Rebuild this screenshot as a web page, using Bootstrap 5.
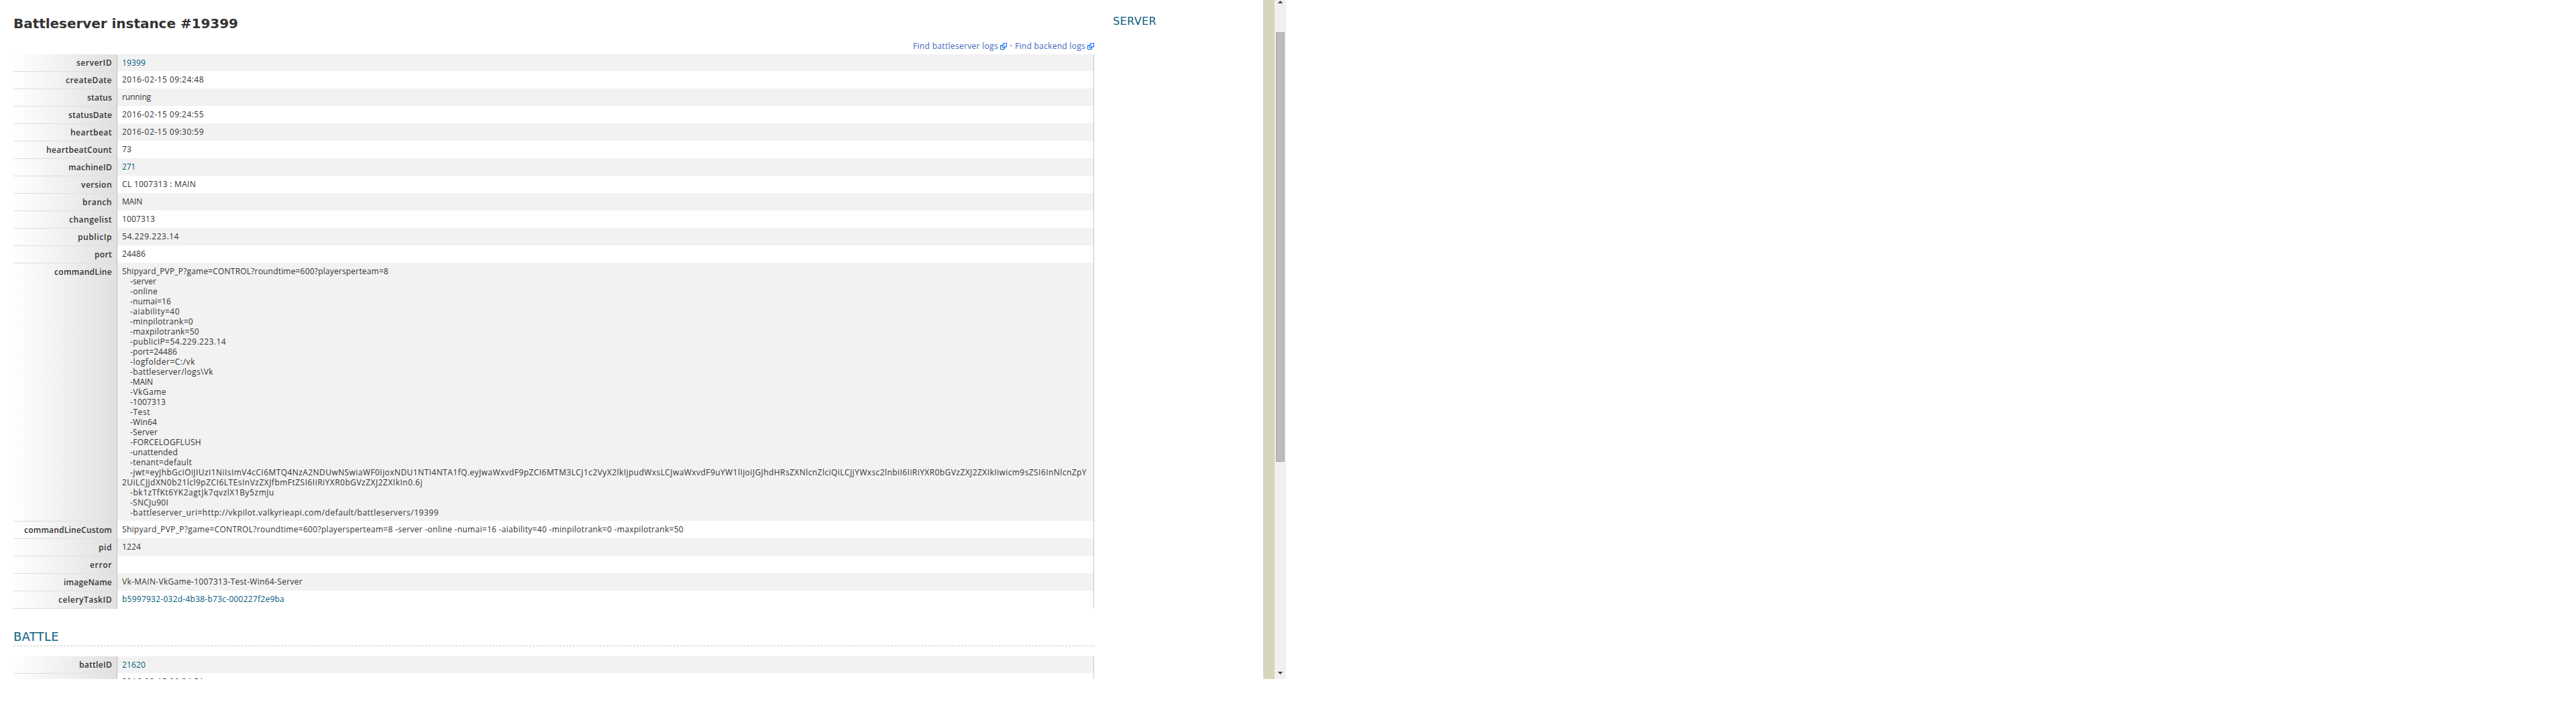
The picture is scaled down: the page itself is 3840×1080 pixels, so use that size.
<!DOCTYPE html>
<html lang="en"><head><meta charset="utf-8"><title>Battleserver instance #19399</title>
<link href="https://cdn.jsdelivr.net/npm/bootstrap@5.3.0/dist/css/bootstrap.min.css" rel="stylesheet">
<script src="https://cdn.jsdelivr.net/npm/bootstrap@5.3.0/dist/js/bootstrap.bundle.min.js"></script>
<style>
body{background:#fff;color:#333;font:12px/15px "Open Sans",sans-serif;overflow:hidden}
.viewport{width:1917px;height:1013px}
.main-col{width:1611px;margin-left:20px}
h1,h2{font-family:"DejaVu Sans",sans-serif;white-space:nowrap}
h1{font-size:20px;line-height:24px;font-weight:700;margin:23px 0 0}
h2{color:#0d6080;font-weight:400}
.log-links{height:34px;padding-top:14px;line-height:16px}
.log-links a{color:#3f66bd;text-decoration:none}
.ext{width:10px;height:10px;display:block;margin:3px 0 0 3px}
.dot-sep{width:12px;text-align:center}
.kv{border-right:1px solid #c8c8c8}
.kv-row{min-height:26px}
.kv-row:first-child{min-height:25px}
.kv-key{width:155px;border-right:1px solid #c0c0c0;padding:5px 7px 0 0;text-align:right;font-weight:600;line-height:16px;background:linear-gradient(to right,#fff,#e0e0e0)}
.kv-row:not(:first-child) .kv-key{padding-top:6px;background:linear-gradient(to right,#ddd,#e0e0e0) 0 0/100% 1px no-repeat,linear-gradient(to right,#fff,#e0e0e0)}
.kv-val{padding:5px 7px 5px;white-space:nowrap}
.kv-row:nth-child(odd) .kv-val{background:#f2f2f2}
.kv-val a{color:#045a7b;text-decoration:none}
.ln{height:15px;white-space:pre}
.ln.arg{padding-left:12px}
.kv-end{width:155px;height:1px;background:#ddd;border-right:1px solid #c0c0c0}
.side{margin-left:28px;font-size:16px;line-height:20px;margin-top:22px;height:20px}
.section{font-size:18px;line-height:22px;margin:31px 0 15px;height:25px;border-bottom:1px dashed #c8c8c8}
.olive{width:17px;background:#d6d6bc}
.sbar{width:17px;background:#f0f0f0;padding:0 2px}
.thumb{height:641px;background:#bbb;border:1px solid #a8a8a8}
</style></head><body>
<div class="viewport d-flex overflow-hidden">
<main class="main-col flex-shrink-0">
<h1><span data-w="335">Battleserver instance #19399</span></h1>
<div class="log-links d-flex justify-content-end">
<a href="#"><span data-w="127">Find battleserver logs</span></a><svg class="ext" viewBox="1 1 10 10"><g id="ext"><path fill="#fff" stroke="#06c" d="M1.500 4.518h5.982V10.500H1.500z"/><path fill="#06f" d="M5.765 1H11v5.390L9.427 7.937l-1.310-1.310L5.393 9.350l-2.690-2.688 2.810-2.808L4.200 2.544z"/><path fill="#fff" d="M9.995 2.004l.022 4.885L8.200 5.070 5.320 7.950 4.090 6.723l2.882-2.880-1.850-1.852z"/></g></svg><span class="dot-sep">·</span><a href="#"><span data-w="105">Find backend logs</span></a><svg class="ext" viewBox="1 1 10 10"><use href="#ext"/></svg>
</div>
<div class="kv" id="server"></div><div class="kv-end"></div>
<h2 class="section"><span data-w="68">BATTLE</span></h2>
<div class="kv" id="battle"></div>
</main>
<aside class="flex-grow-1"><h2 class="side"><span data-w="65">SERVER</span></h2></aside>
<div class="olive flex-shrink-0"></div>
<div class="sbar flex-shrink-0 d-flex flex-column">
<svg width="13" height="48" viewBox="0 0 13 48" shape-rendering="crispEdges"><path d="M3 5h7v-1h-1v-1h-1v-1h-1v-1h-1v1h-1v1h-1v1h-1z" fill="#505050"/></svg>
<div class="thumb"></div>
<svg class="mt-auto" width="13" height="12" viewBox="0 0 13 12" shape-rendering="crispEdges"><path d="M3 1h7v1h-1v1h-1v1h-1v1h-1v-1h-1v-1h-1v-1h-1z" fill="#505050"/></svg>
</div></div>
<script>
// [key, key width, lines, isLink]; a line is [text, width, indented]
const cmd="Shipyard_PVP_P?game=CONTROL?roundtime=600?playersperteam=8";
const server=[
["serverID",53,[["19399",35]],1],["createDate",69,[["2016-02-15 09:24:48",122]]],["status",37,[["running",43]]],
["statusDate",65,[["2016-02-15 09:24:55",122]]],["heartbeat",62,[["2016-02-15 09:30:59",122]]],["heartbeatCount",98,[["73",14]]],
["machineID",65,[["271",20]],1],["version",46,[["CL 1007313 : MAIN",110]]],["branch",44,[["MAIN",30]]],
["changelist",64,[["1007313",49]]],["publicIp",51,[["54.229.223.14",85]]],["port",26,[["24486",35]]],
["commandLine",86,[[cmd,397],["-server",39,1],["-online",41,1],["-numai=16",61,1],["-aiability=40",74,1],["-minpilotrank=0",94,1],
["-maxpilotrank=50",103,1],["-publicIP=54.229.223.14",143,1],["-port=24486",70,1],["-logfolder=C:/vk",97,1],["-battleserver/logs\\Vk",124,1],
["-MAIN",34,1],["-VkGame",54,1],["-1007313",53,1],["-Test",30,1],["-Win64",40,1],["-Server",41,1],["-FORCELOGFLUSH",106,1],
["-unattended",71,1],["-tenant=default",92,1],
["-jwt=eyJhbGciOiJIUzI1NiIsImV4cCI6MTQ4NzA2NDUwNSwiaWF0IjoxNDU1NTI4NTA1fQ.eyJwaWxvdF9pZCI6MTM3LCJ1c2VyX2lkIjpudWxsLCJwaWxvdF9uYW1lIjoiJGJhdHRsZXNlcnZlciQiLCJjYWxsc2lnbiI6IiRiYXR0bGVzZXJ2ZXIkIiwicm9sZSI6InNlcnZpY",1426,1],
["2UiLCJjdXN0b21lcl9pZCI6LTEsInVzZXJfbmFtZSI6IiRiYXR0bGVzZXJ2ZXIkIn0.6j",448],
["-bk1zTfKt6YK2agtJk7qvzlX1By5zmJu",215,1],["-SNCJu90I",57,1],["-battleserver_uri=http://vkpilot.valkyrieapi.com/default/battleservers/19399",460,1]]],
["commandLineCustom",131,[[cmd+" -server -online -numai=16 -aiability=40 -minpilotrank=0 -maxpilotrank=50",837]]],
["pid",20,[["1224",28]]],["error",33,[["",0]]],["imageName",72,[["Vk-MAIN-VkGame-1007313-Test-Win64-Server",269]]],
["celeryTaskID",80,[["b5997932-032d-4b38-b73c-000227f2e9ba",242]],1]];
const battle=[["battleID",49,[["21620",35]],1],["createDate",69,[["2016-02-15 09:24:51",122]]]];
function draw(id,rows){document.getElementById(id).innerHTML=rows.map(([k,kw,lines,link])=>
`<div class="kv-row d-flex"><div class="kv-key flex-shrink-0"><span data-w="${kw}">${k}</span></div><div class="kv-val flex-grow-1">${
lines.map(([t,w,a])=>`<div class="ln${a?' arg':''}">${link?'<a href="#">':''}<span data-w="${w}">${t}</span>${link?'</a>':''}</div>`).join('')}</div></div>`).join('')}
draw('server',server);draw('battle',battle);
document.querySelectorAll('[data-w]').forEach(e=>{const n=e.textContent.length;if(n)e.style.letterSpacing=((+e.dataset.w-e.getBoundingClientRect().width)/n).toFixed(3)+'px'});
</script>
</body></html>
